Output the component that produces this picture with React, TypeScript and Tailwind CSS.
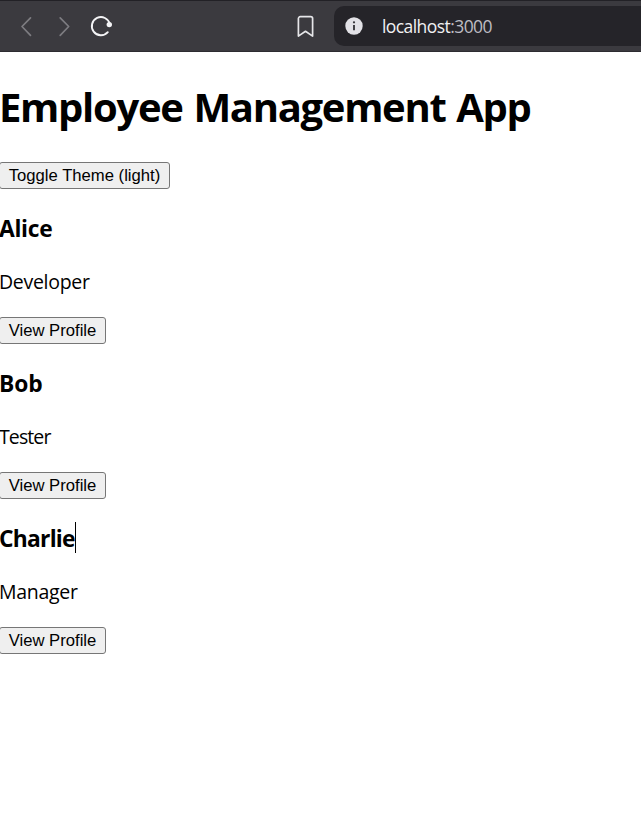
const employees = [
  { name: "Alice", role: "Developer", nameClass: "tracking-[-0.3px]", roleClass: "tracking-[-0.3px]" },
  { name: "Bob", role: "Tester", nameClass: "tracking-[-0.1px]", roleClass: "tracking-[-0.9px]" },
  { name: "Charlie", role: "Manager", nameClass: "tracking-[-0.75px]", roleClass: "tracking-[-0.3px]", caret: true },
];

const buttonClass =
  "block h-[27px] -ml-px rounded-[3px] border border-[#767676] bg-[#efefef] text-center font-['Liberation_Sans',Arial,sans-serif] text-[16.67px] leading-[25px] whitespace-nowrap text-black";

function Toolbar() {
  return (
    <header className="flex h-[52px] items-center border-t border-b border-t-[#222126] border-b-[#2d2c31] bg-[#3b3a3f]">
      <svg className="ml-[14px] size-6 shrink-0" viewBox="0 0 24 24" fill="none" stroke="#7d7c81" strokeWidth="1.7" strokeLinecap="round" strokeLinejoin="round">
        <path d="M16.5 3.8 8 12.5l8.5 8.8" />
      </svg>
      <svg className="ml-[14px] size-6 shrink-0" viewBox="0 0 24 24" fill="none" stroke="#7d7c81" strokeWidth="1.7" strokeLinecap="round" strokeLinejoin="round">
        <path d="M8.2 3.8 16.7 12.5l-8.5 8.8" />
      </svg>
      <svg className="ml-[13px] size-6 shrink-0" viewBox="0 0 24 24" fill="none" stroke="#f4f4f6" strokeWidth="1.9" strokeLinecap="round">
        <path d="M20.8 10.1A9.1 9.1 0 1 0 18.8 18.2" />
        <circle cx="20.3" cy="10.6" r="2.7" fill="#f4f4f6" stroke="none" />
      </svg>
      <svg className="ml-[180px] size-6 shrink-0" viewBox="0 0 24 24" fill="none" stroke="#e6e6e9" strokeWidth="1.7" strokeLinejoin="round">
        <path d="M5.4 4.6a1.9 1.9 0 0 1 1.9-1.9h10.4a1.9 1.9 0 0 1 1.9 1.9v17.5l-7.1-4.8-7.1 4.8z" />
      </svg>
      <div className="ml-[17px] flex h-10 flex-1 items-center rounded-l-[10px] bg-[#252429]">
        <svg className="ml-[11px] size-[18px] shrink-0" viewBox="0 0 18 18">
          <circle cx="9" cy="9" r="8.7" fill="#e2e1e6" />
          <circle cx="9" cy="5.3" r="1.15" fill="#39383d" />
          <path d="M9 8v5.2" stroke="#39383d" strokeWidth="1.9" />
        </svg>
        <div className="ml-[19px] font-['Open_Sans','Noto_Sans',sans-serif] text-[17.5px] leading-6 tracking-[-0.57px] text-[#f1f1f3]">
          localhost<span className="text-[#bdbcc3]">:3000</span>
        </div>
      </div>
    </header>
  );
}

export default function App() {
  return (
    <div className="min-h-[833px] bg-white font-['Open_Sans','Noto_Sans',sans-serif] text-black">
      <Toolbar />
      <main className="pt-7">
        <h1 className="-ml-px text-[40px] leading-[54px] font-bold tracking-[-1.3px] [word-spacing:1.7px] whitespace-nowrap">Employee Management App</h1>
        <button className={`${buttonClass} mt-7 w-[171px]`}>Toggle Theme (light)</button>
        {employees.map((e) => (
          <section key={e.name} className="pt-6">
            <h3 className={`-ml-px flex h-8 items-center text-[22.8px] leading-8 font-bold ${e.nameClass}`}>
              {e.name}
              {e.caret && <span className="-mt-[3px] ml-[0.6px] h-[31px] w-px bg-black" />}
            </h3>
            <p className={`-ml-px mt-[23px] text-[19.5px] leading-[27px] ${e.roleClass}`}>{e.role}</p>
            <button className={`${buttonClass} mt-[22px] w-[107px]`}>View Profile</button>
          </section>
        ))}
      </main>
    </div>
  );
}
